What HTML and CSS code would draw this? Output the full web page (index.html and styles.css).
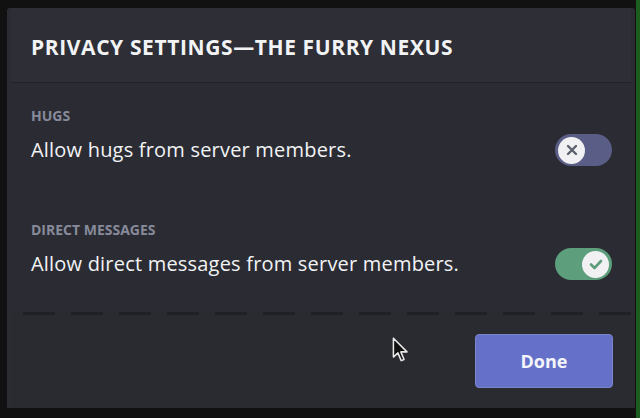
FILE: index.html
```html
<!DOCTYPE html>
<html>
<head>
<meta charset="utf-8">
<link rel="stylesheet" href="styles.css">
</head>
<body>
<div class="stage">
  <div class="modal">
    <div class="header">
      <h1 class="title">Privacy Settings—The Furry Nexus</h1>
    </div>
    <div class="content">
      <div class="setting">
        <div class="label">Hugs</div>
        <div class="row">
          <div class="desc">Allow hugs from server members.</div>
          <div class="toggle off">
            <span class="knob">
              <svg viewBox="0 0 20 20" width="20" height="20"><path d="M6 6 L14 14 M14 6 L6 14" stroke="#5d606d" stroke-width="2.4" stroke-linecap="round" fill="none"/></svg>
            </span>
          </div>
        </div>
      </div>
      <div class="setting">
        <div class="label">Direct Messages</div>
        <div class="row">
          <div class="desc">Allow direct messages from server members.</div>
          <div class="toggle on">
            <span class="knob">
              <svg viewBox="0 0 20 20" width="20" height="20"><path d="M5 10.5 L8.5 14 L15 7" stroke="#5d9e7c" stroke-width="2.6" stroke-linecap="round" stroke-linejoin="round" fill="none"/></svg>
            </span>
          </div>
        </div>
      </div>
    </div>
    <div class="footer">
      <button class="done">Done</button>
    </div>
    <svg class="cursor" viewBox="0 0 14 22" width="17" height="26"><path d="M1 1 L1 17 L4.8 13.4 L7.6 20 L10 19 L7.3 12.6 L12.5 12.6 Z" fill="#111" stroke="#e8e8e8" stroke-width="1.3" stroke-linejoin="round"/></svg>
  </div>
</div>
<div class="green"></div>
</body>
</html>
```
FILE: styles.css
```css
html, body {
  margin: 0;
  padding: 0;
  height: 100%;
}
body {
  background: #111112;
  display: flex;
  font-family: "Open Sans", "Noto Sans", sans-serif;
  overflow: hidden;
}
.stage {
  flex: 1;
  padding: 8px 1px 10px 7px;
}
.green {
  width: 4px;
  background: #1b5e1f;
}
.modal {
  position: relative;
  height: 400px;
  background: #2b2c33;
  display: flex;
  flex-direction: column;
  border-radius: 3px 3px 0 0;
}
.header {
  height: 75px;
  box-sizing: border-box;
  background: #2d2e36;
  border-bottom: 1px solid #222328;
  padding: 25px 20px 0;
  margin: 0 4px;
}
.title {
  margin: 0;
  font-size: 21px;
  font-weight: 700;
  text-transform: uppercase;
  color: #f2f3f5;
  letter-spacing: 0.6px;
  line-height: 28px;
  white-space: nowrap;
}
.content {
  padding: 24px 24px 0;
  display: flex;
  flex-direction: column;
  gap: 55px;
  flex: 1;
}
.label {
  font-size: 14px;
  font-weight: 700;
  text-transform: uppercase;
  color: #878a9b;
  line-height: 18px;
}
.row {
  display: flex;
  align-items: center;
  justify-content: space-between;
  margin-top: 9px;
}
.desc {
  font-size: 20px;
  color: #f2f3f5;
  font-weight: 500;
  line-height: 24px;
  letter-spacing: 0.2px;
}
.toggle {
  width: 57px;
  height: 32px;
  border-radius: 16px;
  box-sizing: border-box;
  display: flex;
  align-items: center;
  padding: 0 3px;
  margin-right: -1px;
}
.toggle.off {
  background: #5a5e86;
  justify-content: flex-start;
}
.toggle.on {
  background: #5d9e7c;
  justify-content: flex-end;
}
.knob {
  width: 27px;
  height: 27px;
  border-radius: 50%;
  background: #f1f1f3;
  display: flex;
  align-items: center;
  justify-content: center;
}
.footer {
  height: 96px;
  box-sizing: border-box;
  background: #2a2b31;
  background-image: repeating-linear-gradient(90deg, #1f2025 0 32px, transparent 32px 48px);
  background-size: 100% 3px;
  background-repeat: no-repeat;
  background-position: 12px 0;
  padding: 3px 22px 0 0;
  display: flex;
  align-items: center;
  justify-content: flex-end;
  margin-left: 4px;
}
.done {
  width: 138px;
  height: 54px;
  background: #6571c8;
  border: 1px solid #7a84c9;
  border-radius: 4px;
  color: #f4f5fb;
  font-family: "Open Sans", "Noto Sans", sans-serif;
  font-size: 18px;
  font-weight: 700;
  margin-top: -2px;
}
.cursor {
  position: absolute;
  left: 385px;
  top: 329px;
}
```
